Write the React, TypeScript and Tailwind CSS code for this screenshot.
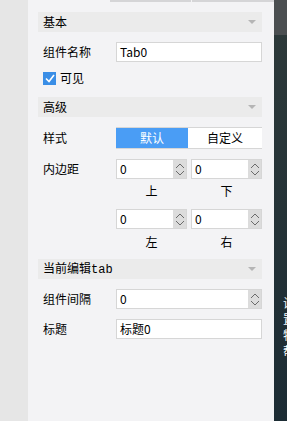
import React from "react";

const font = { fontFamily: '"Noto Sans CJK SC", "Liberation Sans", sans-serif' };

function Chevron() {
  return (
    <svg width="8" height="5" viewBox="0 0 8 5" className="text-[#6b6b6b]">
      <path d="M0 5 L4 1 L8 5" fill="none" stroke="currentColor" strokeWidth="1" />
    </svg>
  );
}

function SectionHeader({ children }: { children: React.ReactNode }) {
  return (
    <div className="flex h-[20px] items-center justify-between bg-[#ebebeb] pl-[5px] pr-[6px] text-[12px] leading-none text-black">
      <span>{children}</span>
      <svg width="8" height="5" viewBox="0 0 8 5">
        <path d="M0 0 L8 0 L4 4 Z" fill="#b5b5b5" />
      </svg>
    </div>
  );
}

function TextInput({ value }: { value: string }) {
  return (
    <div className="flex h-[20px] w-[146px] items-center border border-[#d6d6d6] bg-white px-[3px] text-[12px] leading-none text-black">
      {value}
    </div>
  );
}

function NumberInput({ value, wide }: { value: string; wide?: boolean }) {
  return (
    <div
      className={`flex h-[20px] items-stretch border border-[#d6d6d6] bg-white text-[12px] leading-none text-black ${
        wide ? "w-[146px]" : "w-[71px]"
      }`}
    >
      <div className="flex flex-1 items-center px-[3px]">{value}</div>
      <div className="flex w-[13px] flex-col items-center justify-center gap-[3px] bg-[#dcdcdc]">
        <Chevron />
        <span className="rotate-180 leading-none">
          <Chevron />
        </span>
      </div>
    </div>
  );
}

function Row({ label, children }: { label: string; children: React.ReactNode }) {
  return (
    <div className="flex items-center">
      <div className="w-[78px] pl-[5px] text-[12px] leading-none text-black">{label}</div>
      {children}
    </div>
  );
}

export default function App() {
  return (
    <div className="flex h-[421px] w-[287px] overflow-hidden" style={font}>
      <div className="w-[28px] shrink-0 bg-[#e6e6e6]" />

      <div className="flex w-[246px] shrink-0 flex-col bg-[#f3f3f5]">
        <div className="flex h-[2px]">
          <div className="w-[82px]" />
          <div className="w-[81px] bg-[#d5d5d7]" />
          <div className="w-[1px]" />
          <div className="w-[82px] bg-[#d5d5d7]" />
        </div>

        <div className="flex flex-col pl-[10px] pr-[12px] pt-[10px]">
          <SectionHeader>基本</SectionHeader>

          <div className="mt-[10px]">
            <Row label="组件名称">
              <TextInput value="Tab0" />
            </Row>
          </div>

          <div className="mt-[8px] flex h-[16px] items-center gap-[4px] pl-[5px] text-[12px] leading-none text-black">
            <span className="flex h-[13px] w-[13px] items-center justify-center bg-[#3a8ee6]">
              <svg width="10" height="9" viewBox="0 0 10 9">
                <path d="M1 4.5 L4 7.5 L9 1" fill="none" stroke="white" strokeWidth="1.6" />
              </svg>
            </span>
            <span>可见</span>
          </div>

          <div className="mt-[11px]">
            <SectionHeader>高级</SectionHeader>
          </div>

          <div className="mt-[10px]">
            <Row label="样式">
              <div className="flex h-[22px] w-[146px] border-b border-t border-[#d6d6d6] bg-white text-[12px] leading-none">
                <div className="flex w-[72px] items-center justify-center bg-[#4a9df5] text-white">默认</div>
                <div className="flex flex-1 items-center justify-center text-black">自定义</div>
              </div>
            </Row>
          </div>

          <div className="mt-[10px] flex">
            <div className="w-[78px] pl-[5px] pt-[4px] text-[12px] leading-none text-black">内边距</div>
            <div className="flex flex-col">
              <div className="flex gap-[4px]">
                <NumberInput value="0" />
                <NumberInput value="0" />
              </div>
              <div className="flex h-[30px] gap-[4px] pb-[6px] text-[12px] leading-none text-black">
                <div className="flex w-[71px] items-center justify-center">上</div>
                <div className="flex w-[71px] items-center justify-center">下</div>
              </div>
              <div className="flex gap-[4px]">
                <NumberInput value="0" />
                <NumberInput value="0" />
              </div>
              <div className="flex h-[24px] gap-[4px] pt-[2px] text-[12px] leading-none text-black">
                <div className="flex w-[71px] items-center justify-center">左</div>
                <div className="flex w-[71px] items-center justify-center">右</div>
              </div>
            </div>
          </div>

          <div className="mt-[6px]">
            <SectionHeader>
              当前编辑<span style={{ fontFamily: '"Liberation Mono", monospace' }}>tab</span>
            </SectionHeader>
          </div>

          <div className="mt-[10px]">
            <Row label="组件间隔">
              <NumberInput value="0" wide />
            </Row>
          </div>

          <div className="mt-[10px]">
            <Row label="标题">
              <TextInput value="标题0" />
            </Row>
          </div>
        </div>
      </div>

      <div className="flex w-[13px] shrink-0 flex-col overflow-hidden bg-gradient-to-b from-[#2e3a3a] to-[#1c2c34]">
        <div className="h-[35px] bg-[#4b4f51]" />
        <div className="mt-[262px] flex flex-col gap-[4px] pl-[9px] text-[12px] leading-none text-white">
          <span>设</span>
          <span>置</span>
          <span>特</span>
          <span>帮</span>
        </div>
      </div>
    </div>
  );
}
